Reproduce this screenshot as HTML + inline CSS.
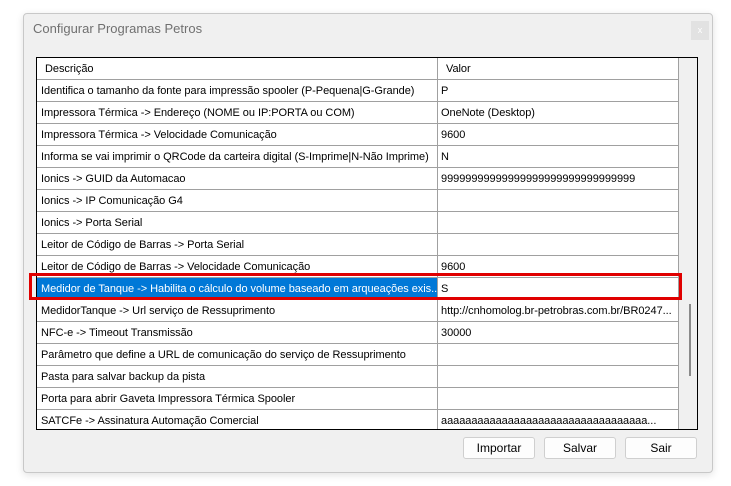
<!DOCTYPE html>
<html><head><meta charset="utf-8"><style>
body{margin:0;width:731px;height:486px;background:#fff;position:relative;overflow:hidden;font-family:"Liberation Sans",sans-serif;}
.win{position:absolute;left:23px;top:13px;width:688px;height:458px;background:#f0f0f0;border:1px solid #c8c8c8;border-radius:4px;box-shadow:0 2px 8px rgba(0,0,0,.12);}
.title{position:absolute;left:33px;top:21px;font-size:13px;color:#707070;}
.close{position:absolute;left:691px;top:21px;width:18px;height:19px;background:#e2e2e2;color:#fff;font-size:9px;text-align:center;line-height:19px;}
.grid{position:absolute;left:36px;top:57px;width:660px;height:371px;border:1px solid #000;background:#f0f0f0;overflow:hidden;}
.row{position:absolute;left:0;width:642px;height:22px;font-size:11px;letter-spacing:-0.05px;color:#000;}
.c1,.c2{position:absolute;top:0;height:21px;line-height:22px;border-bottom:1px solid #a0a0a0;background:#fff;white-space:nowrap;overflow:hidden;}
.c1{left:0;width:396px;border-right:1px solid #a0a0a0;padding-left:4px;}
.c2{left:401px;width:237px;padding-left:3px;border-right:1px solid #a0a0a0;}
.hdr .c1{padding-left:8px;width:392px;}
.hdr .c2{padding-left:8px;width:232px;}
.sel .c1{background:#0078d7;color:#fff;}
.sb{position:absolute;left:642px;top:0;width:18px;height:371px;background:#f0f0f0;}
.thumb{position:absolute;left:652px;top:246px;width:2px;height:72px;background:#8a8a8a;}
.red{position:absolute;left:29px;top:273px;width:647px;height:21px;border:3px solid #e00000;}
.btn{position:absolute;top:437px;width:70px;height:20px;border:1px solid #cfcfcf;border-radius:3px;background:#fdfdfd;font-size:12px;text-align:center;line-height:20px;}
</style></head><body>
<div class="win"></div>
<div class="title">Configurar Programas Petros</div>
<div class="close">x</div>
<div class="grid">
<div class="row hdr" style="top:0"><div class="c1">Descrição</div><div class="c2">Valor</div></div>
<div class="row" style="top:22px"><div class="c1">Identifica o tamanho da fonte para impressão spooler (P-Pequena|G-Grande)</div><div class="c2">P</div></div>
<div class="row" style="top:44px"><div class="c1">Impressora Térmica -&gt; Endereço (NOME ou IP:PORTA ou COM)</div><div class="c2">OneNote (Desktop)</div></div>
<div class="row" style="top:66px"><div class="c1">Impressora Térmica -&gt; Velocidade Comunicação</div><div class="c2">9600</div></div>
<div class="row" style="top:88px"><div class="c1">Informa se vai imprimir o QRCode da carteira digital (S-Imprime|N-Não Imprime)</div><div class="c2">N</div></div>
<div class="row" style="top:110px"><div class="c1">Ionics -&gt; GUID da Automacao</div><div class="c2">99999999999999999999999999999999</div></div>
<div class="row" style="top:132px"><div class="c1">Ionics -&gt; IP Comunicação G4</div><div class="c2"></div></div>
<div class="row" style="top:154px"><div class="c1">Ionics -&gt; Porta Serial</div><div class="c2"></div></div>
<div class="row" style="top:176px"><div class="c1">Leitor de Código de Barras -&gt; Porta Serial</div><div class="c2"></div></div>
<div class="row" style="top:198px"><div class="c1">Leitor de Código de Barras -&gt; Velocidade Comunicação</div><div class="c2">9600</div></div>
<div class="row sel" style="top:220px"><div class="c1">Medidor de Tanque -&gt; Habilita o cálculo do volume baseado em arqueações exis...</div><div class="c2">S</div></div>
<div class="row" style="top:242px"><div class="c1">MedidorTanque -&gt; Url serviço de Ressuprimento</div><div class="c2">http://cnhomolog.br-petrobras.com.br/BR0247...</div></div>
<div class="row" style="top:264px"><div class="c1">NFC-e -&gt; Timeout Transmissão</div><div class="c2">30000</div></div>
<div class="row" style="top:286px"><div class="c1">Parâmetro que define a URL de comunicação do serviço de Ressuprimento</div><div class="c2"></div></div>
<div class="row" style="top:308px"><div class="c1">Pasta para salvar backup da pista</div><div class="c2"></div></div>
<div class="row" style="top:330px"><div class="c1">Porta para abrir Gaveta Impressora Térmica Spooler</div><div class="c2"></div></div>
<div class="row" style="top:352px"><div class="c1">SATCFe -&gt; Assinatura Automação Comercial</div><div class="c2">aaaaaaaaaaaaaaaaaaaaaaaaaaaaaaaaaa...</div></div>
<div class="sb"></div>
<div class="thumb"></div>
</div>
<div class="red"></div>
<div class="btn" style="left:463px">Importar</div>
<div class="btn" style="left:544px">Salvar</div>
<div class="btn" style="left:625px">Sair</div>
</body></html>
